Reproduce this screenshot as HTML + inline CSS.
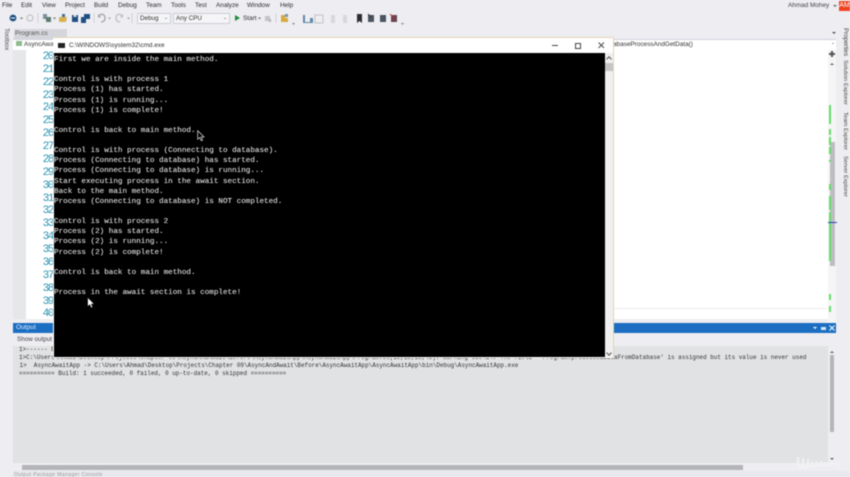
<!DOCTYPE html>
<html><head><meta charset="utf-8"><style>
html,body{margin:0;padding:0;width:850px;height:477px;overflow:hidden;background:#eeeef2}
#r{position:absolute;left:0;top:0;width:850px;height:477px;overflow:hidden;filter:blur(.4px);font-family:"Liberation Sans",sans-serif;color:#333}
#r div{position:absolute}
.m{position:absolute;top:1px;font-size:6.4px;line-height:10px;white-space:nowrap;color:#2d2d30}
.t{white-space:nowrap}
.ln{position:absolute;width:27px;left:26px;text-align:right;font-family:"Liberation Mono",monospace;font-size:11px;letter-spacing:-1.4px;line-height:13px;color:#2b91af}
.c{position:absolute;left:54px;font-family:"Liberation Mono",monospace;font-size:7.62px;line-height:10px;color:#e8e8e8;white-space:pre;transform:translateY(1px);-webkit-text-stroke:.06px #e8e8e8}
.o{position:absolute;font-family:"Liberation Mono",monospace;font-size:5.95px;line-height:8px;color:#333;white-space:pre}
.v{position:absolute;left:849px;transform:rotate(90deg);transform-origin:0 0;font-size:5.9px;line-height:8px;white-space:nowrap;color:#444}
.g{position:absolute;left:829px;width:2px;background:#65dc6a}
</style></head><body><div id="r">
<span class="m" style="left:2px">File</span><span class="m" style="left:21px">Edit</span><span class="m" style="left:42px">View</span><span class="m" style="left:65px">Project</span><span class="m" style="left:94px">Build</span><span class="m" style="left:118px">Debug</span><span class="m" style="left:146px">Team</span><span class="m" style="left:171px">Tools</span><span class="m" style="left:195px">Test</span><span class="m" style="left:216px">Analyze</span><span class="m" style="left:247px">Window</span><span class="m" style="left:280px">Help</span>
<span class="m" style="left:788px;color:#444">Ahmad Mohey</span>
<div style="left:833px;top:5px;width:0;height:0;border:2px solid transparent;border-top-color:#666"></div>
<div style="left:839px;top:1px;width:11px;height:10px;background:#f0421f;color:#fff;font-size:7px;line-height:10px;text-align:center">AM</div>

<!-- toolbar -->
<svg style="position:absolute;left:0;top:10px" width="410" height="16">
<circle cx="13" cy="8" r="3.4" fill="#1f4f82"/><path d="M11 8h4" stroke="#fff" stroke-width="1"/>
<path d="M20 7.500h3l-1.500 2z" fill="#777"/>
<circle cx="30" cy="8" r="3" fill="none" stroke="#bcbcc0"/>
<path d="M38 3v10M94 3v10M132 3v10M276 3v10" stroke="#d0d0d6"/>
<rect x="43" y="4" width="4" height="5" fill="#7f8f9c"/><rect x="46" y="7" width="5" height="5" fill="#5b7d6f"/>
<path d="M53 7.500h3l-1.500 2z" fill="#777"/>
<path d="M59 7h8l-1 5h-7z" fill="#d9b04f"/><path d="M62 4h3v3h-3z" fill="#3f6f9a"/>
<path d="M72 5h6v7h-6z" fill="#1f4f82"/><path d="M73.500 5h3v2h-3z" fill="#cfd8e2"/>
<path d="M84 4h6v5h-6z" fill="#1f4f82"/><path d="M81 7h5v6h-5z" fill="#1f4f82"/>
<path d="M99 6c2-3 6-2 6 2s-3 4-4 4" fill="none" stroke="#a2a2a6" stroke-width="1.200"/><path d="M98 4v3.500h3z" fill="#a2a2a6"/>
<path d="M108 7.500h3l-1.500 2z" fill="#aaa"/>
<path d="M122 6c-2-3-6-2-6 2s3 4 4 4" fill="none" stroke="#bdbdc1" stroke-width="1.200"/><path d="M123 4v3.500h-3z" fill="#bdbdc1"/>
<path d="M127 7.500h3l-1.500 2z" fill="#aaa"/>
<path d="M235 5l5 3-5 3z" fill="#1d8a3a"/>
<path d="M258 7.500h3l-1.500 2z" fill="#777"/>
<path d="M265 6h5v5h-5z" fill="#c4c4c8"/><path d="M269 9h2v3h-2z" fill="#b5b5ba"/>
<path d="M281 5h4v3h3v4h-7z" fill="#d8a93f"/><path d="M285 4h3v3h-3z" fill="#7896ad"/>
<path d="M292 13h3l-1.500 2z" fill="#888"/>
<path d="M303 5h2v7h5v-4h3v5h-10z" fill="#5f8aa8"/>
<path d="M315 5h8v8h-8z" fill="none" stroke="#c3c3c7"/>
<path d="M331 5h4v8h-4zM343 5h4v8h-4z" fill="#d8d8dc"/>
<path d="M357 4h5v9l-2.500-2-2.500 2z" fill="#2d2d30"/>
<path d="M368 5h6v7h-6z" fill="#4a5560"/><path d="M368 4l3 3" stroke="#333"/>
<path d="M380 5h6v7h-6z" fill="#4a5560"/>
<path d="M391 5h6v7h-6z" fill="#6b4450"/><path d="M390 4l3 3" stroke="#b23b3b"/>
<path d="M401 13h3l-1.500 2z" fill="#888"/>
</svg>
<div style="left:137px;top:13px;width:32px;height:9px;background:#f5f5f7;border:1px solid #ccced6;font-size:6.3px;line-height:9px;text-indent:2px">Debug</div>
<div style="left:173px;top:13px;width:55px;height:9px;background:#f5f5f7;border:1px solid #ccced6;font-size:6.3px;line-height:9px;text-indent:2px">Any CPU</div>
<div style="left:165px;top:18px;width:0;height:0;border:1.500px solid transparent;border-top-color:#555"></div>
<div style="left:224px;top:18px;width:0;height:0;border:1.500px solid transparent;border-top-color:#555"></div>
<span class="m" style="left:243px;top:14px">Start</span>

<!-- side tabs -->
<div class="v" style="left:10px;top:28px;color:#555;font-size:6.5px">Toolbox</div>
<div class="v" style="top:28px;font-size:6.2px">Properties</div>
<div class="v" style="top:60px">Solution Explorer</div>
<div class="v" style="top:112px">Team Explorer</div>
<div class="v" style="top:156px">Server Explorer</div>

<!-- doc tabs -->
<div style="left:14px;top:29px;width:53px;height:10px;background:#d5d6dc;font-size:6.4px;line-height:10px;color:#555;text-indent:1px">Program.cs</div>
<div style="left:13px;top:39px;width:823px;height:10px;background:#fff;border-top:1px solid #cfd0dc;border-bottom:1px solid #cfd0dc"></div>
<div style="left:16px;top:41px;width:6px;height:5px;background:#8fb98f"></div>
<div style="left:24px;top:40px;font-size:6.4px;line-height:9px;color:#333" class="t">AsyncAwaitApp</div>
<div style="left:613px;top:40px;font-size:6.4px;line-height:9px;color:#333" class="t">abaseProcessAndGetData()</div>
<div style="left:832px;top:32px;width:0;height:0;border:2px solid transparent;border-top-color:#555"></div>
<div style="left:832px;top:43px;width:0;height:0;border:1.500px solid transparent;border-top-color:#555"></div>

<!-- editor -->
<div style="left:13px;top:50px;width:13px;height:269px;background:#e6e7e8"></div>
<div style="left:26px;top:50px;width:802px;height:269px;background:#fff"></div>
<div style="left:614px;top:308px;width:213px;height:1px;background:#ececf0"></div>
<div style="left:828px;top:50px;width:8px;height:273px;background:#f5f5f6"></div>
<div style="left:829px;top:53px;width:6px;height:2px;background:#555"></div>
<div style="left:831px;top:51px;width:2px;height:6px;background:#555"></div>
<div style="left:830px;top:61px;width:0;height:0;border:2px solid transparent;border-bottom-color:#666"></div>
<div style="left:830px;top:142px;width:5px;height:124px;background:#bdbdc0"></div>
<div class="g" style="top:105px;height:19px"></div><div class="g" style="top:129px;height:6px"></div><div class="g" style="top:137px;height:8px"></div><div class="g" style="top:147px;height:7px"></div><div class="g" style="top:160px;height:2px"></div><div class="g" style="top:184px;height:6px"></div><div class="g" style="top:196px;height:14px"></div><div class="g" style="top:212px;height:49px"></div><div class="g" style="top:294px;height:6px"></div><div class="g" style="top:306px;height:6px"></div>
<div style="left:828px;top:222px;width:9px;height:1px;background:#2a3fc0"></div>
<div class="ln" style="top:51px">20</div><div class="ln" style="top:64px">21</div><div class="ln" style="top:77px">22</div><div class="ln" style="top:90px">23</div><div class="ln" style="top:102px">24</div><div class="ln" style="top:115px">25</div><div class="ln" style="top:128px">26</div><div class="ln" style="top:141px">27</div><div class="ln" style="top:154px">28</div><div class="ln" style="top:167px">29</div><div class="ln" style="top:180px">30</div><div class="ln" style="top:193px">31</div><div class="ln" style="top:205px">32</div><div class="ln" style="top:218px">33</div><div class="ln" style="top:231px">34</div><div class="ln" style="top:244px">35</div><div class="ln" style="top:257px">36</div><div class="ln" style="top:270px">37</div><div class="ln" style="top:283px">38</div><div class="ln" style="top:296px">39</div><div class="ln" style="top:308px">40</div>

<!-- output -->
<div style="left:13px;top:323px;width:823px;height:10px;background:#1b6ec2;color:#e8f0fa;font-size:6.6px;line-height:10px;text-indent:3px">Output</div>
<div style="left:813px;top:327px;width:0;height:0;border:2px solid transparent;border-top-color:#fff"></div>
<div style="left:821px;top:327px;width:5px;height:3px;background:#d6e6f6"></div>
<svg style="position:absolute;left:829px;top:325px" width="6" height="6"><path d="M.5.5l5 5M5.500.5l-5 5" stroke="#fff" stroke-width="1"/></svg>
<div style="left:13px;top:333px;width:823px;height:13px;background:#eeeef2"></div>
<div style="left:17px;top:335px;font-size:6.3px;line-height:10px;color:#444" class="t">Show output</div>
<div style="left:13px;top:346px;width:815px;height:117px;background:#e1e2e4"></div>
<div style="left:828px;top:346px;width:8px;height:117px;background:#eeeef2"></div>
<div style="left:830px;top:355px;width:4px;height:77px;background:#b4b5b8"></div>
<div style="left:830px;top:349px;width:0;height:0;border:2px solid transparent;border-bottom-color:#666"></div>
<div style="left:830px;top:458px;width:0;height:0;border:2px solid transparent;border-top-color:#666"></div>
<div style="left:13px;top:463px;width:823px;height:8px;background:#eeeef2"></div>
<div style="left:22px;top:465px;width:721px;height:5px;background:#b4b5b8"></div>
<div style="left:13px;top:471px;width:837px;height:6px;background:#e8e8ee"></div>
<div style="left:14px;top:473px;font-size:5px;line-height:4px;color:#999;letter-spacing:.4px" class="t">Output Package Manager Console</div>
<div class="o" style="left:19px;top:346px">1&gt;------ Build started: Project: AsyncAwaitApp, Configuration: Debug Any CPU ------</div>
<div class="o" style="left:19px;top:354px">1&gt;C:\Users\Ahmad\Desktop\Projects\Chapter 09\AsyncAndAwait\Before\AsyncAwaitApp\AsyncAwaitApp\Program.cs(15,15,15,45): warning CS0414: The field  'Program.processedDataFromDatabase' is assigned but its value is never used</div>
<div class="o" style="left:19.500px;top:362px">1&gt;  AsyncAwaitApp -&gt; C:\Users\Ahmad\Desktop\Projects\Chapter 09\AsyncAndAwait\Before\AsyncAwaitApp\AsyncAwaitApp\bin\Debug\AsyncAwaitApp.exe</div>
<div class="o" style="left:19px;top:369.500px">========== Build: 1 succeeded, 0 failed, 0 up-to-date, 0 skipped ==========</div>
<div style="left:811px;top:458px;font-size:9px;line-height:12px;color:#f3f3f5;font-weight:bold" class="t">Udemy</div>
<svg style="position:absolute;left:796px;top:455px" width="14" height="15"><path d="M2 2v7c0 5 5 5 5 0V3M7 9c0 5 5 5 5 0V4" fill="none" stroke="#f3f3f5" stroke-width="1.800"/></svg>

<!-- cmd -->
<div style="left:53px;top:37px;width:560px;height:320px;background:#fff;border-top:1px solid #e4d3b5;border-right:1px solid #e4d3b5"></div>
<div style="left:54px;top:53px;width:551px;height:304px;background:#000"></div>
<div style="left:605px;top:53px;width:8px;height:304px;background:#f0f0f0"></div>
<div style="left:605px;top:63px;width:8px;height:8px;background:#c4c4c4"></div>
<div style="left:607px;top:57px;width:3px;height:3px;border-left:1px solid #555;border-top:1px solid #555;transform:rotate(45deg)"></div>
<div style="left:607px;top:351px;width:3px;height:3px;border-right:1px solid #555;border-bottom:1px solid #555;transform:rotate(45deg)"></div>
<div style="left:58px;top:43px;width:7px;height:5px;background:#222"></div>
<div style="left:69px;top:41px;font-size:6.4px;line-height:9px;color:#333" class="t">C:\WINDOWS\system32\cmd.exe</div>
<div style="left:552px;top:45px;width:6px;height:1px;background:#444"></div>
<div style="left:575px;top:43px;width:4px;height:4px;border:1px solid #444"></div>
<svg style="position:absolute;left:598px;top:42px" width="7" height="7"><path d="M.5.5l5.500 5.500M6 .5L.5 6" stroke="#444" stroke-width=".9" fill="none"/></svg>
<div class="c" style="top:54px">First we are inside the main method.</div>
<div class="c" style="top:74px">Control is with process 1</div>
<div class="c" style="top:84px">Process (1) has started.</div>
<div class="c" style="top:94.5px">Process (1) is running...</div>
<div class="c" style="top:104.5px">Process (1) is complete!</div>
<div class="c" style="top:125px">Control is back to main method.</div>
<div class="c" style="top:145px">Control is with process (Connecting to database).</div>
<div class="c" style="top:155px">Process (Connecting to database) has started.</div>
<div class="c" style="top:165px">Process (Connecting to database) is running...</div>
<div class="c" style="top:175.5px">Start executing process in the await section.</div>
<div class="c" style="top:185.5px">Back to the main method.</div>
<div class="c" style="top:195.5px">Process (Connecting to database) is NOT completed.</div>
<div class="c" style="top:216px">Control is with process 2</div>
<div class="c" style="top:226px">Process (2) has started.</div>
<div class="c" style="top:236px">Process (2) is running...</div>
<div class="c" style="top:246.5px">Process (2) is complete!</div>
<div class="c" style="top:266.5px">Control is back to main method.</div>
<div class="c" style="top:287px">Process in the await section is complete!</div>
<svg style="position:absolute;left:197px;top:130px" width="8" height="12"><path d="M.7.7v8.600l2.100-1.800 1.400 3.200 1.400-.6-1.400-3.100h2.800z" fill="#000" stroke="#ccc" stroke-width=".8"/></svg>
<svg style="position:absolute;left:87px;top:297px" width="8" height="12"><path d="M.7.7v8.600l2.100-1.800 1.400 3.200 1.400-.6-1.400-3.100h2.800z" fill="#fff" stroke="#333" stroke-width=".5"/></svg>
</div></body></html>
